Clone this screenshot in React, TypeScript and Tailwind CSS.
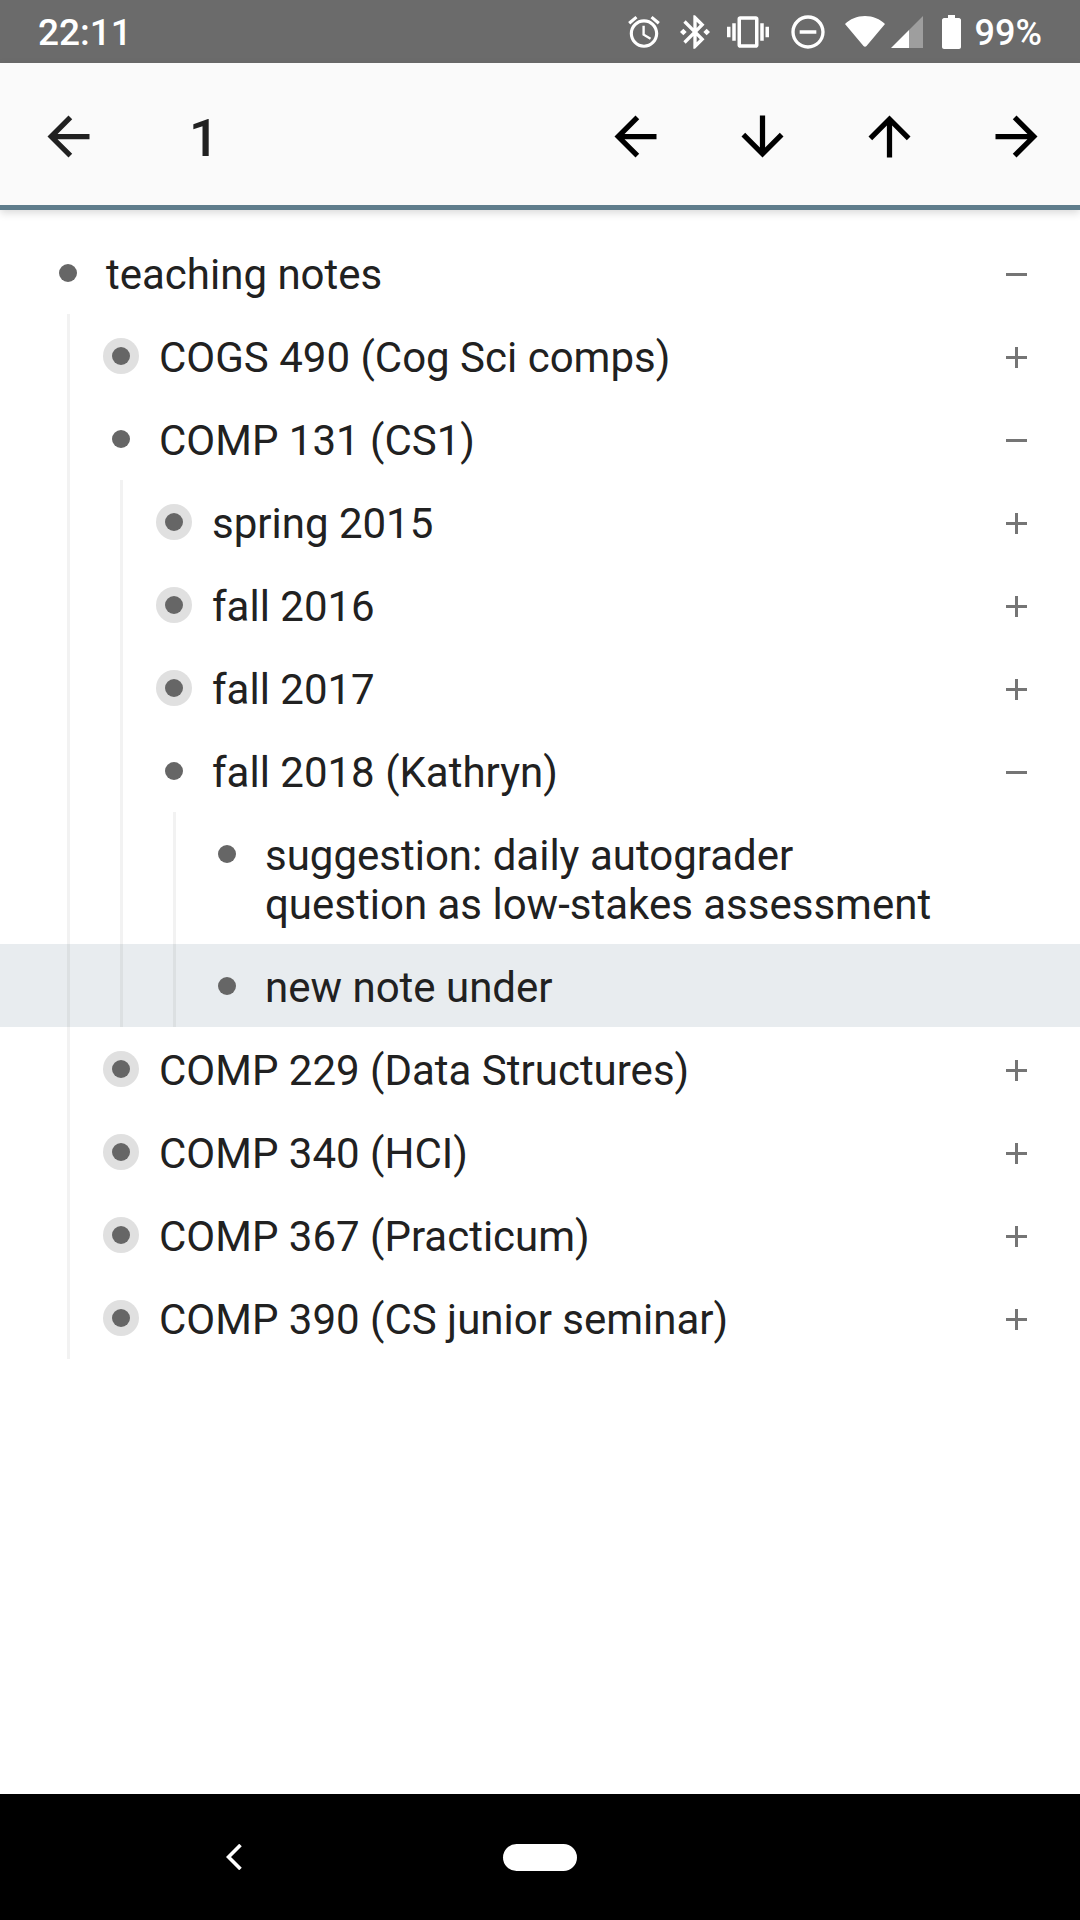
const guideColor = "bg-black/5";

type Row = { text: string; lines?: string[]; depth: number; sign?: "+" | "-"; halo?: boolean; active?: boolean };

const rows: Row[] = [
  { text: "teaching notes", depth: 0, sign: "-" },
  { text: "COGS 490 (Cog Sci comps)", depth: 1, sign: "+", halo: true },
  { text: "COMP 131 (CS1)", depth: 1, sign: "-" },
  { text: "spring 2015", depth: 2, sign: "+", halo: true },
  { text: "fall 2016", depth: 2, sign: "+", halo: true },
  { text: "fall 2017", depth: 2, sign: "+", halo: true },
  { text: "fall 2018 (Kathryn)", depth: 2, sign: "-" },
  { text: "suggestion: daily autograder", lines: ["suggestion: daily autograder", "question as low-stakes assessment"], depth: 3 },
  { text: "new note under", depth: 3, active: true },
  { text: "COMP 229 (Data Structures)", depth: 1, sign: "+", halo: true },
  { text: "COMP 340 (HCI)", depth: 1, sign: "+", halo: true },
  { text: "COMP 367 (Practicum)", depth: 1, sign: "+", halo: true },
  { text: "COMP 390 (CS junior seminar)", depth: 1, sign: "+", halo: true },
];

function Arrow({ rotate = "" }: { rotate?: string }) {
  return (
    <svg viewBox="0 0 24 24" className={`w-[63px] h-[63px] ${rotate}`} fill="currentColor">
      <path d="M20 11H7.83l5.59-5.59L12 4l-8 8 8 8 1.41-1.41L7.83 13H20v-2z" />
    </svg>
  );
}

function Sign({ kind }: { kind: "+" | "-" }) {
  return (
    <svg viewBox="0 0 21 21" className="w-[21px] h-[21px]" fill="#757575">
      <rect x="0" y="9" width="21" height="3" />
      {kind === "+" && <rect x="9" y="0" width="3" height="21" />}
    </svg>
  );
}

function Bullet({ halo }: { halo?: boolean }) {
  return (
    <div className="w-[52px] h-[49px] flex items-center justify-center shrink-0 relative">
      {halo && <div className="absolute w-[36px] h-[36px] rounded-full bg-[#e0e0e0]" />}
      <div className="relative w-[18px] h-[18px] rounded-full bg-[#666666]" />
    </div>
  );
}

function TreeRow({ row }: { row: Row }) {
  return (
    <div className={`flex items-stretch pl-[42px] pr-[53px] ${row.active ? "bg-[#e8ecef]" : ""}`}>
      {Array.from({ length: row.depth }).map((_, i) => (
        <div key={i} className="w-[53px] flex justify-center shrink-0">
          <div className={`w-[3px] ${guideColor}`} />
        </div>
      ))}
      <div className="flex-1 flex items-start py-[17px] min-w-0">
        <Bullet halo={row.halo} />
        <div className="flex-1 pl-[12px] text-[42px] leading-[49px] mt-[2px] -mb-[2px] text-[#212121] whitespace-nowrap">
          {row.lines ? row.lines.map((l) => <div key={l}>{l}</div>) : row.text}
        </div>
        {row.sign && (
          <div className="h-[49px] flex items-center justify-center shrink-0 w-[21px] mt-[2px] -mb-[2px]">
            <Sign kind={row.sign} />
          </div>
        )}
      </div>
    </div>
  );
}

export default function App() {
  return (
    <div className="w-[1080px] h-[1920px] flex flex-col bg-white overflow-hidden" style={{ fontFamily: "Roboto, sans-serif" }}>
      <div className="h-[63px] bg-[#6b6b6b] flex items-center pl-[38px] pr-[38px] text-white shrink-0">
        <div className="text-[37px] font-medium leading-none mt-[2px]">22:11</div>
        <div className="ml-auto flex items-center">
          <svg viewBox="0 0 24 24" className="w-[38px] h-[38px]" fill="white"><path d="M22 5.72l-4.6-3.86-1.29 1.53 4.6 3.86L22 5.72zM7.88 3.39L6.6 1.86 2 5.71l1.29 1.53 4.59-3.85zM12.5 8H11v6l4.75 2.85.75-1.23-4-2.37V8zM12 4c-4.97 0-9 4.03-9 9s4.03 9 9 9 9-4.03 9-9-4.03-9-9-9zm0 16c-3.87 0-7-3.13-7-7s3.13-7 7-7 7 3.13 7 7-3.13 7-7 7z" /></svg>
          <svg viewBox="0 0 24 24" className="w-[40px] h-[40px] ml-[12px]" fill="white"><path d="M7 12l-2-2-2 2 2 2 2-2zm10.71-4.29L12 2h-1v7.59L6.41 5 5 6.41 10.59 12 5 17.59 6.41 19 11 14.41V22h1l5.71-5.71-4.3-4.29 4.3-4.29zM13 5.83l1.88 1.88L13 9.59V5.83zm1.88 10.46L13 18.17v-3.76l1.88 1.88zM19 10l-2 2 2 2 2-2-2-2z" /></svg>
          <svg viewBox="0 0 24 24" className="w-[42px] h-[42px] ml-[12px]" fill="white"><path d="M0 15h2V9H0v6zm3 2h2V7H3v10zm19-8v6h2V9h-2zm-3 8h2V7h-2v10zM16.5 3h-9C6.67 3 6 3.67 6 4.5v15c0 .83.67 1.5 1.5 1.5h9c.83 0 1.5-.67 1.5-1.5v-15c0-.83-.67-1.5-1.5-1.5zM16 19H8V5h8v14z" /></svg>
          <svg viewBox="0 0 24 24" className="w-[40px] h-[40px] ml-[19px]" fill="white"><path d="M12 2C6.48 2 2 6.48 2 12s4.48 10 10 10 10-4.48 10-10S17.52 2 12 2zm0 18c-4.41 0-8-3.59-8-8s3.59-8 8-8 8 3.59 8 8-3.59 8-8 8zM7 11h10v2H7z" /></svg>
          <svg viewBox="0 0 40 34" className="w-[40px] h-[34px] ml-[17px]" fill="white"><path d="M0 9C5 4 12 1 20 1s15 3 20 8L21.5 31c-.8 1-2.2 1-3 0z" /></svg>
          <svg viewBox="0 0 32 32" className="w-[32px] h-[32px] ml-[6px]" fill="white"><path d="M0 32 L18 14 V32 Z" /><path d="M18 14 L32 0 V32 H18 Z" fillOpacity="0.35" /></svg>
          <svg viewBox="0 0 19 34" className="w-[19px] h-[34px] ml-[19px]" fill="white"><path d="M6 0h7v3h4c1 0 2 1 2 2v27c0 1-1 2-2 2H2c-1 0-2-1-2-2V5c0-1 1-2 2-2h4z" /></svg>
          <div className="text-[36px] font-medium leading-none mt-[2px] ml-[14px]">99%</div>
        </div>
      </div>
      <div className="h-[147px] bg-[#fafafa] border-b-[5px] border-[#5f7d8c] flex items-center shrink-0 shadow-[0_3px_8px_rgba(0,0,0,0.15)] relative pl-[37px] pr-[32px] pt-[4px] text-[#212121]">
        <Arrow />
        <div className="ml-[89px] text-[52.5px] leading-none font-medium mt-[4px]">1</div>
        <div className="ml-auto flex items-center gap-[64px] text-black">
          <Arrow />
          <Arrow rotate="-rotate-90" />
          <Arrow rotate="rotate-90" />
          <Arrow rotate="rotate-180" />
        </div>
      </div>
      <div className="flex-1 pt-[21px]">
        {rows.map((r) => (
          <TreeRow key={r.text} row={r} />
        ))}
      </div>
      <div className="h-[126px] bg-black flex items-center shrink-0 relative">
        <svg viewBox="0 0 16 26" className="w-[16px] h-[26px] ml-[226px]" fill="none" stroke="white" strokeWidth="3.6"><path d="M14.5 1 L2.5 13 L14.5 25" /></svg>
        <div className="w-[74px] h-[27px] rounded-full bg-white ml-[261px]" />
      </div>
    </div>
  );
}
